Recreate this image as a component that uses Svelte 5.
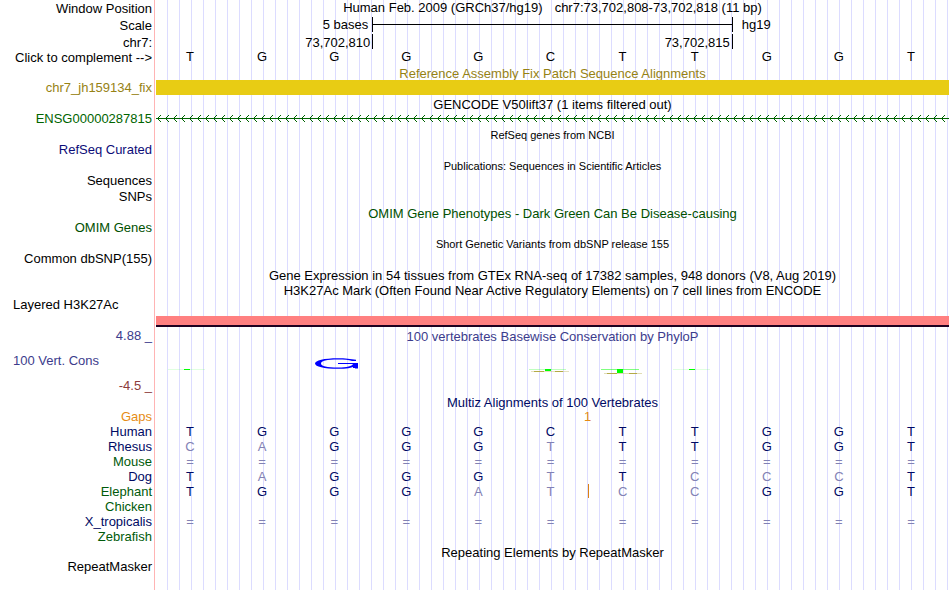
<script lang="ts">
	interface Species {
		name: string;
		color: string;
		bases: string;
		insertAt?: number;
	}

	let complement = $state(false);

	const pairs: Record<string, string> = { A: 'T', T: 'A', G: 'C', C: 'G' };
	const reference = 'TGGGGCTTGGT';
	const sequence = $derived(
		[...reference].map((base) => (complement ? pairs[base] : base))
	);

	const species: Species[] = [
		{ name: 'Human', color: 'navy', bases: 'TGGGGCTTGGT' },
		{ name: 'Rhesus', color: 'navy', bases: 'CAGGGTTTGGT' },
		{ name: 'Mouse', color: 'green', bases: '===========' },
		{ name: 'Dog', color: 'navy', bases: 'TAGGGTTCCCT' },
		{ name: 'Elephant', color: 'green', bases: 'TGGGATCCGGT', insertAt: 6 },
		{ name: 'Chicken', color: 'green', bases: '' },
		{ name: 'X_tropicalis', color: 'navy', bases: '===========' },
		{ name: 'Zebrafish', color: 'green', bases: '' }
	];
</script>

<main class="browser">
	<div class="row header h17">
		<div class="label">Window Position</div>
		<div class="title position">
			<span>Human Feb. 2009 (GRCh37/hg19)</span>
			<span>chr7:73,702,808-73,702,818 (11 bp)</span>
		</div>
	</div>
	<div class="row header h17">
		<div class="label">Scale</div>
		<div class="track columns scale">
			<span class="scale-text">5 bases</span>
			<span class="scale-bar"></span>
			<span class="assembly">hg19</span>
		</div>
	</div>
	<div class="row header h16">
		<div class="label">chr7:</div>
		<div class="track columns">
			<span class="coordinate first">73,702,810</span>
			<span class="coordinate second">73,702,815</span>
		</div>
	</div>
	<div class="row h15">
		<div class="label">
			<button onclick={() => (complement = !complement)}>Click to complement --&gt;</button>
		</div>
		<div class="track columns sequence">
			{#each sequence as base}
				<span class="base">{base}</span>
			{/each}
		</div>
	</div>

	<div class="row h15">
		<div class="title gold">Reference Assembly Fix Patch Sequence Alignments</div>
	</div>
	<div class="row h15">
		<div class="label gold">chr7_jh159134_fix</div>
		<div class="track patch"></div>
	</div>

	<div class="row h16">
		<div class="title">GENCODE V50lift37 (1 items filtered out)</div>
	</div>
	<div class="row h15">
		<div class="label gene">ENSG00000287815</div>
		<svg class="track" width="100%" height="15" shape-rendering="crispEdges" aria-hidden="true">
			<defs>
				<pattern id="strand" width="8" height="15" patternUnits="userSpaceOnUse">
					<path d="M0 7h8v1H0zM2 6h1v1H2zM3 5h1v1H3zM4 4h1v1H4zM2 8h1v1H2zM3 9h1v1H3zM4 10h1v1H4z" fill="#006400" />
				</pattern>
			</defs>
			<rect width="100%" height="15" fill="url(#strand)" />
		</svg>
	</div>

	<div class="row h16">
		<div class="title small">RefSeq genes from NCBI</div>
	</div>
	<div class="row h15">
		<div class="label refseq">RefSeq Curated</div>
	</div>
	<div class="row h16">
		<div class="title small">Publications: Sequences in Scientific Articles</div>
	</div>
	<div class="row h16">
		<div class="label">Sequences</div>
	</div>
	<div class="row h16">
		<div class="label">SNPs</div>
	</div>
	<div class="row h15">
		<div class="title omim">OMIM Gene Phenotypes - Dark Green Can Be Disease-causing</div>
	</div>
	<div class="row h15">
		<div class="label omim">OMIM Genes</div>
	</div>
	<div class="row h16">
		<div class="title small">Short Genetic Variants from dbSNP release 155</div>
	</div>
	<div class="row h16">
		<div class="label">Common dbSNP(155)</div>
	</div>
	<div class="row h15">
		<div class="title">
			Gene Expression in 54 tissues from GTEx RNA-seq of 17382 samples, 948 donors (V8, Aug 2019)
		</div>
	</div>
	<div class="row h15">
		<div class="title">
			H3K27Ac Mark (Often Found Near Active Regulatory Elements) on 7 cell lines from ENCODE
		</div>
	</div>
	<div class="row histone-row">
		<div class="label left">Layered H3K27Ac</div>
		<div class="track histone"></div>
	</div>

	<div class="row h15">
		<div class="label phylop">4.88 _</div>
		<div class="title phylop">100 vertebrates Basewise Conservation by PhyloP</div>
	</div>
	<div class="row logo-row">
		<div class="label left phylop">100 Vert. Cons</div>
		<div class="track columns">
			{#each reference as _, i}
				<svg class="logo" width="72" height="33" viewBox="0 0 72 33" aria-hidden="true">
					{#if i === 2}
						<path
							d="M56 14.8C51 13.8 45 13.2 38 13.2C24 13.2 15 15.4 15 18.5S24 23.8 38 23.8C46 23.8 52 22.8 55 21.2V23.4H58V18H38V19H53C52 21.3 47 22.5 38 22.5C27 22.5 21 21.2 21 18.5S27 14.5 38 14.5C44 14.5 49 14.9 52 16H56Z"
							fill="#0000ff"
						/>
						<path d="M53 18h5v5h-5z" fill="#0000ff" />
					{:else if i === 0 || i === 7}
						<path d="M12 24h37v1H12z" fill="#00ff00" opacity="0.12" />
						<path d="M28 24h6v1h-6z" fill="#00ff00" />
					{:else if i === 5}
						<path d="M13 24h37v1H13z" fill="#00ff00" opacity="0.25" />
						<path d="M15 26h38v1H15z" fill="#b4aa46" opacity="0.35" />
						<path d="M18 26h10v1H18zM39 26h8v1H39z" fill="#b4aa46" />
						<path d="M29 24h6v2h-6z" fill="#00ff00" />
					{:else if i === 6}
						<path d="M12 24h38v1H12z" fill="#00ff00" opacity="0.5" />
						<path d="M15 28h38v1H15z" fill="#b4aa46" opacity="0.4" />
						<path d="M18 28h10v1H18zM40 28h8v1H40z" fill="#b4aa46" />
						<path d="M28 24h6v4h-6z" fill="#00ff00" />
					{/if}
				</svg>
			{/each}
		</div>
	</div>
	<div class="row h16">
		<div class="label negative">-4.5 _</div>
	</div>

	<div class="row h15">
		<div class="title navy">Multiz Alignments of 100 Vertebrates</div>
	</div>
	<div class="row h15">
		<div class="label gap">Gaps</div>
		<div class="track columns">
			<span class="gap-count gap">1</span>
		</div>
	</div>
	{#each species as row (row.name)}
		<div class="row h15">
			<div class="label {row.color}">{row.name}</div>
			<div class="track columns">
				{#each row.bases as base, i}
					<span
						class="base navy"
						class:mismatch={base !== reference[i]}
						class:insertion={row.insertAt === i}
					>{base}</span>
				{/each}
			</div>
		</div>
	{/each}

	<div class="row h15">
		<div class="title">Repeating Elements by RepeatMasker</div>
	</div>
	<div class="row h15">
		<div class="label">RepeatMasker</div>
	</div>
</main>

<style>
	:global(body) {
		margin: 0;
		background: white;
	}

	.browser {
		box-sizing: border-box;
		min-height: 100vh;
		font-family: 'Liberation Sans', Arial, sans-serif;
		font-size: 13px;
		line-height: 15px;
		color: #000;
		white-space: nowrap;
		background:
			linear-gradient(#ffb4b4, #ffb4b4) 154px 0 / 1px 100% no-repeat,
			repeating-linear-gradient(to right, transparent 0 11px, #dcdcff 11px 12px) 156px 0 no-repeat;
	}

	.row {
		display: grid;
		grid-template-columns: 152px minmax(0, 1fr);
		column-gap: 4px;
		align-items: start;
		padding-right: 1px;
	}

	.h15 { height: 15px; }
	.h16 { height: 16px; }
	.h17 { height: 17px; }

	.label {
		text-align: right;
	}

	.label.left {
		padding-left: 13px;
		text-align: left;
	}

	.header .label {
		align-self: center;
	}

	.label button {
		display: block;
		margin-left: auto;
		padding: 0;
		border: none;
		background: none;
		font: inherit;
		color: inherit;
		cursor: pointer;
	}

	.title,
	.track {
		grid-column: 2;
		grid-row: 1;
	}

	.title {
		align-self: end;
		line-height: 13px;
		text-align: center;
	}

	.small {
		font-size: 11px;
	}

	.position {
		display: flex;
		justify-content: center;
		gap: 12px;
		align-self: start;
		line-height: 15px;
	}

	.columns {
		display: grid;
		grid-template-columns: repeat(11, minmax(0, 1fr));
		align-items: start;
		height: 100%;
	}

	.sequence {
		line-height: 13px;
	}

	.base {
		position: relative;
		padding-right: 4px;
		text-align: center;
	}

	.scale-text {
		grid-column: 1 / 4;
		padding-right: 4px;
		text-align: right;
	}

	.scale-bar {
		grid-column: 4 / 9;
		height: 15px;
		border: solid #000;
		border-width: 0 1px;
		background: linear-gradient(#000, #000) 0 7px / 100% 1px no-repeat;
	}

	.assembly {
		padding-left: 9px;
	}

	.coordinate {
		height: 15px;
		padding-right: 2px;
		border-right: 1px solid #000;
		line-height: 17px;
		text-align: right;
	}

	.first {
		grid-column: 1 / 4;
		margin-right: -1px;
	}

	.second {
		grid-column: 4 / 9;
	}

	.patch {
		height: 100%;
		background: #e8cc14;
	}

	.histone-row {
		height: 31px;
	}

	.histone {
		height: 9px;
		margin-top: 19px;
		border-bottom: 2px solid #1e0020;
		background: #ff8080;
	}

	.logo-row {
		height: 35px;
		align-items: center;
	}

	.logo {
		display: block;
		align-self: end;
	}

	.gap-count {
		grid-column: 6 / 8;
		padding-right: 2px;
		text-align: center;
	}

	.insertion::before {
		content: '';
		position: absolute;
		top: 0;
		left: -1px;
		width: 1px;
		height: 14px;
		background: #dc8214;
	}

	.gold { color: #968214; }
	.gene { color: #006400; }
	.refseq { color: #0c0c78; }
	.omim { color: #005000; }
	.phylop { color: #3c3c8c; }
	.negative { color: #8c3c3c; }
	.gap { color: #e68c14; }
	.green { color: #005a0a; }
	.navy { color: #000a64; }
	.mismatch { color: #8282b4; }
</style>
